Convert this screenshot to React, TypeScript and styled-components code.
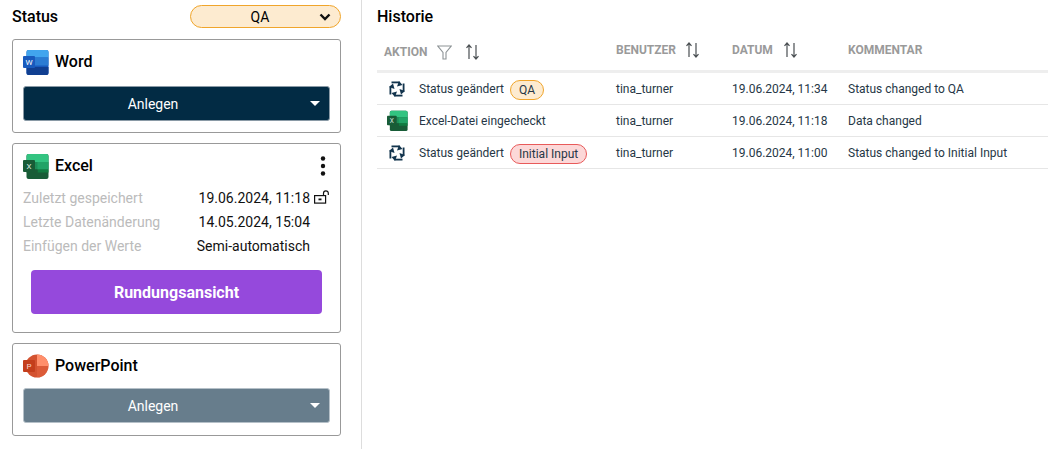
import React from "react";
import styled, { createGlobalStyle } from "styled-components";

const GlobalStyle = createGlobalStyle`
  html, body {
    margin: 0;
    padding: 0;
    background: #fff;
    font-family: Roboto, "Liberation Sans", sans-serif;
    color: #000;
  }
`;

const Page = styled.div`
  display: flex;
  width: 1048px;
  height: 449px;
  overflow: hidden;
`;

const LeftColumn = styled.div`
  width: 329px;
  margin-left: 12px;
  padding-top: 5px;
  padding-right: 20px;
  border-right: 1px solid #ddd;
  display: flex;
  flex-direction: column;
`;

const StatusHeader = styled.div`
  display: flex;
  justify-content: space-between;
  align-items: center;
  height: 23px;
  margin-bottom: 11px;
`;

const Heading = styled.h2`
  margin: 0;
  font-size: 16px;
  font-weight: 500;
  line-height: 23px;
`;

const StatusSelect = styled.div`
  box-sizing: border-box;
  width: 151px;
  height: 23px;
  border: 1px solid #f0a52b;
  border-radius: 12px;
  background: #fdebd0;
  display: flex;
  align-items: center;
  font-size: 14px;
  padding-right: 9px;
`;

const SelectValue = styled.span`
  flex: 1;
  text-align: center;
  padding-left: 10px;
`;

const Card = styled.section<{ $height: number }>`
  box-sizing: border-box;
  height: ${(p) => p.$height}px;
  border: 1px solid #999;
  border-radius: 3px;
  padding: 9px 10px 0;
  margin-bottom: 10px;
`;

const CardTitleRow = styled.div`
  display: flex;
  align-items: center;
  height: 26px;
  gap: 6px;
`;

const CardTitle = styled.span`
  flex: 1;
  font-size: 16px;
  font-weight: 500;
  padding-bottom: 2px;
`;

const SplitButton = styled.button<{ $disabled?: boolean; $top: number }>`
  box-sizing: border-box;
  position: relative;
  display: block;
  width: 100%;
  height: 35px;
  margin-top: ${(p) => p.$top}px;
  border: 1px solid ${(p) => (p.$disabled ? "#b5c0c8" : "#8a9aa6")};
  border-radius: 3px;
  background: ${(p) => (p.$disabled ? "#677d8c" : "#022b44")};
  color: #fff;
  font-family: inherit;
  font-size: 14px;
  padding: 0 47px 0 0;
`;

const Caret = styled.span`
  position: absolute;
  right: 9px;
  top: 14px;
  width: 0;
  height: 0;
  border-left: 5px solid transparent;
  border-right: 5px solid transparent;
  border-top: 5px solid #fff;
`;

const KebabSlot = styled.span`
  display: flex;
  margin-right: 4px;
`;

const InfoList = styled.div`
  display: grid;
  grid-template-columns: 1fr auto 20px;
  grid-auto-rows: 24px;
  margin-top: 7px;
  font-size: 14px;
  align-items: center;
`;

const InfoLabel = styled.span`
  color: #bbb;
`;

const InfoValue = styled.span`
  text-align: right;
  color: #111;
`;

const InfoIcon = styled.span`
  display: flex;
  justify-content: flex-end;
  padding-bottom: 2px;
`;

const RoundingButton = styled.button`
  display: block;
  width: 291px;
  height: 44px;
  margin: 12px 0 0 8px;
  border: 0;
  border-radius: 4px;
  background: #9549dc;
  color: #fff;
  font-family: inherit;
  font-size: 16px;
  font-weight: 700;
`;

const RightColumn = styled.div`
  flex: 1;
  padding: 5px 0 0 15px;
`;

const HistoryTable = styled.table`
  width: 671px;
  margin-top: 3px;
  border-collapse: collapse;
  table-layout: fixed;
  font-size: 12px;
`;

const HeadCell = styled.th<{ $width?: number; $low?: boolean }>`
  width: ${(p) => (p.$width ? `${p.$width}px` : "auto")};
  height: 36px;
  padding: ${(p) => (p.$low ? "3px 7px 0" : "0 7px 2px")};
  text-align: left;
  vertical-align: middle;
  border-bottom: 3px solid #eee;
  font-size: 12px;
  font-weight: 700;
  color: #9a9a9a;
  white-space: nowrap;
`;

const HeadInner = styled.span<{ $gap: number }>`
  display: inline-flex;
  align-items: center;
  gap: ${(p) => p.$gap}px;
`;

const FilterSlot = styled.span`
  display: flex;
  margin-right: 3px;
`;

const Cell = styled.td`
  height: 31px;
  padding: 0 7px;
  border-bottom: 1px solid #e6e6e6;
  color: #263746;
  white-space: nowrap;
`;

const ActionWrap = styled.div`
  display: flex;
  align-items: center;
`;

const ActionIconSlot = styled.span`
  display: flex;
  justify-content: center;
  width: 26px;
  margin-right: 9px;
`;

const Pill = styled.span<{ $tone: "qa" | "initial" }>`
  display: inline-block;
  margin: 2px 0 0 6px;
  padding: 0 8px;
  height: 18px;
  line-height: 18px;
  border-radius: 10px;
  border: 1px solid ${(p) => (p.$tone === "qa" ? "#f0a52b" : "#e85a5a")};
  background: ${(p) => (p.$tone === "qa" ? "#fdebd0" : "#fcd8d8")};
  color: #263746;
`;

const Chevron = () => (
  <svg width="12" height="8" viewBox="0 0 12 8">
    <path d="M1.5 1.5 6 6l4.5-4.5" fill="none" stroke="#111" strokeWidth="2.4" />
  </svg>
);

const WordIcon = () => (
  <svg width="26" height="26" viewBox="0 0 26 26">
    <rect x="3.5" y="1" width="22" height="25" rx="2" fill="#185abd" />
    <path d="M3.5 3a2 2 0 0 1 2-2h18a2 2 0 0 1 2 2v5.5h-22z" fill="#41a5ee" />
    <rect x="3.5" y="8.5" width="22" height="8" fill="#2b7cd3" />
    <path d="M3.5 18h22v6a2 2 0 0 1-2 2h-18a2 2 0 0 1-2-2z" fill="#103f91" />
    <rect x="0" y="7" width="12" height="12" rx="1" fill="#185abd" />
    <text x="6" y="16.2" textAnchor="middle" fontSize="8" fill="#fff" fontFamily="Roboto">W</text>
  </svg>
);

const ExcelIcon = ({ size = 26 }: { size?: number }) => (
  <svg width={size} height={size} viewBox="0 0 26 26">
    <rect x="3.5" y="1" width="22" height="25" rx="2" fill="#185c37" />
    <path d="M3.5 3a2 2 0 0 1 2-2h18a2 2 0 0 1 2 2v6h-22z" fill="#33c481" />
    <rect x="3.5" y="9" width="22" height="7.5" fill="#21a366" opacity=".7" />
    <rect x="14.5" y="9" width="11" height="7.5" fill="#21a366" />
    <rect x="14.5" y="16.5" width="11" height="3" fill="#107c41" />
    <rect x="3.5" y="16.5" width="11" height="3" fill="#185c37" />
    <rect x="0" y="7" width="12" height="12" rx="1" fill="#185c37" />
    <text x="6" y="16.2" textAnchor="middle" fontSize="8" fill="#dfeee6" fontFamily="Roboto">X</text>
  </svg>
);

const PowerPointIcon = () => (
  <svg width="26" height="26" viewBox="0 0 26 26">
    <circle cx="14" cy="13" r="11.5" fill="#d35230" />
    <path d="M14 1.5A11.5 11.5 0 0 1 25.5 13H14z" fill="#ff8f6b" />
    <path d="M14 13h11.5A11.5 11.5 0 0 1 14 24.5z" fill="#ed6c47" opacity=".35" />
    <rect x="0" y="7" width="12" height="12" rx="1" fill="#c43e1c" />
    <text x="6" y="16.2" textAnchor="middle" fontSize="8" fill="#f7d5c9" fontFamily="Roboto">P</text>
  </svg>
);

const KebabIcon = () => (
  <svg width="6" height="20" viewBox="0 0 6 20">
    <circle cx="3" cy="2.5" r="2.2" fill="#111" />
    <circle cx="3" cy="10" r="2.2" fill="#111" />
    <circle cx="3" cy="17.5" r="2.2" fill="#111" />
  </svg>
);

const LockOpenIcon = () => (
  <svg width="16" height="14" viewBox="0 0 16 14" fill="none" stroke="#111" strokeWidth="1.2">
    <rect x="0.6" y="5.6" width="11" height="7.5" />
    <path d="M9.5 5.5V3.2a2.4 2.4 0 0 1 4.8 0V5" />
    <rect x="4.5" y="8.5" width="3" height="1.8" fill="#111" stroke="none" />
  </svg>
);

const FilterIcon = () => (
  <svg width="15" height="15" viewBox="0 0 15 15" fill="none" stroke="#8d9396" strokeWidth="1.1">
    <path d="M.8 1h13.4L9 7.5V14H6V7.5z" />
  </svg>
);

const SortIcon = () => (
  <svg width="15" height="16" viewBox="0 0 15 16" fill="none" stroke="#4a4f52" strokeWidth="1.2">
    <path d="M4 15V1M1.5 3.8 4 1l2.5 2.8" />
    <path d="M11 1v14M8.5 12.2 11 15l2.5-2.8" />
  </svg>
);

const CycleIcon = () => (
  <svg width="16" height="16" viewBox="0 0 16 16">
    {[0, 90, 180, 270].map((angle) => (
      <g key={angle} transform={`rotate(${angle} 8 8)`} fill="#12344d">
        <rect x="2.5" y="0.5" width="8" height="1.8" />
        <path d="M10 0 13.5 4 8 5.5z" />
      </g>
    ))}
  </svg>
);

const historyRows = [
  { kind: "status", label: "Status geändert", pill: "QA", tone: "qa", date: "19.06.2024, 11:34", comment: "Status changed to QA" },
  { kind: "excel", label: "Excel-Datei eingecheckt", date: "19.06.2024, 11:18", comment: "Data changed" },
  { kind: "status", label: "Status geändert", pill: "Initial Input", tone: "initial", date: "19.06.2024, 11:00", comment: "Status changed to Initial Input" },
] as const;

export default function App() {
  return (
    <>
      <GlobalStyle />
      <Page>
        <LeftColumn>
          <StatusHeader>
            <Heading>Status</Heading>
            <StatusSelect>
              <SelectValue>QA</SelectValue>
              <Chevron />
            </StatusSelect>
          </StatusHeader>

          <Card $height={94}>
            <CardTitleRow>
              <WordIcon />
              <CardTitle>Word</CardTitle>
            </CardTitleRow>
            <SplitButton $top={11}>
              Anlegen
              <Caret />
            </SplitButton>
          </Card>

          <Card $height={190}>
            <CardTitleRow>
              <ExcelIcon />
              <CardTitle>Excel</CardTitle>
              <KebabSlot>
                <KebabIcon />
              </KebabSlot>
            </CardTitleRow>
            <InfoList>
              <InfoLabel>Zuletzt gespeichert</InfoLabel>
              <InfoValue>19.06.2024, 11:18</InfoValue>
              <InfoIcon>
                <LockOpenIcon />
              </InfoIcon>
              <InfoLabel>Letzte Datenänderung</InfoLabel>
              <InfoValue>14.05.2024, 15:04</InfoValue>
              <span />
              <InfoLabel>Einfügen der Werte</InfoLabel>
              <InfoValue>Semi-automatisch</InfoValue>
              <span />
            </InfoList>
            <RoundingButton>Rundungsansicht</RoundingButton>
          </Card>

          <Card $height={93}>
            <CardTitleRow>
              <PowerPointIcon />
              <CardTitle>PowerPoint</CardTitle>
            </CardTitleRow>
            <SplitButton $disabled $top={9}>
              Anlegen
              <Caret />
            </SplitButton>
          </Card>
        </LeftColumn>

        <RightColumn>
          <Heading>Historie</Heading>
          <HistoryTable>
            <thead>
              <tr>
                <HeadCell $width={218} $low>
                  <HeadInner $gap={10}>
                    AKTION
                    <FilterSlot>
                      <FilterIcon />
                    </FilterSlot>
                    <SortIcon />
                  </HeadInner>
                </HeadCell>
                <HeadCell $width={102}>
                  <HeadInner $gap={9}>
                    BENUTZER
                    <SortIcon />
                  </HeadInner>
                </HeadCell>
                <HeadCell $width={102}>
                  <HeadInner $gap={10}>
                    DATUM
                    <SortIcon />
                  </HeadInner>
                </HeadCell>
                <HeadCell>KOMMENTAR</HeadCell>
              </tr>
            </thead>
            <tbody>
              {historyRows.map((row) => (
                <tr key={row.date}>
                  <Cell>
                    <ActionWrap>
                      <ActionIconSlot>
                        {row.kind === "excel" ? <ExcelIcon size={21} /> : <CycleIcon />}
                      </ActionIconSlot>
                      {row.label}
                      {"pill" in row && <Pill $tone={row.tone}>{row.pill}</Pill>}
                    </ActionWrap>
                  </Cell>
                  <Cell>tina_turner</Cell>
                  <Cell>{row.date}</Cell>
                  <Cell>{row.comment}</Cell>
                </tr>
              ))}
            </tbody>
          </HistoryTable>
        </RightColumn>
      </Page>
    </>
  );
}
